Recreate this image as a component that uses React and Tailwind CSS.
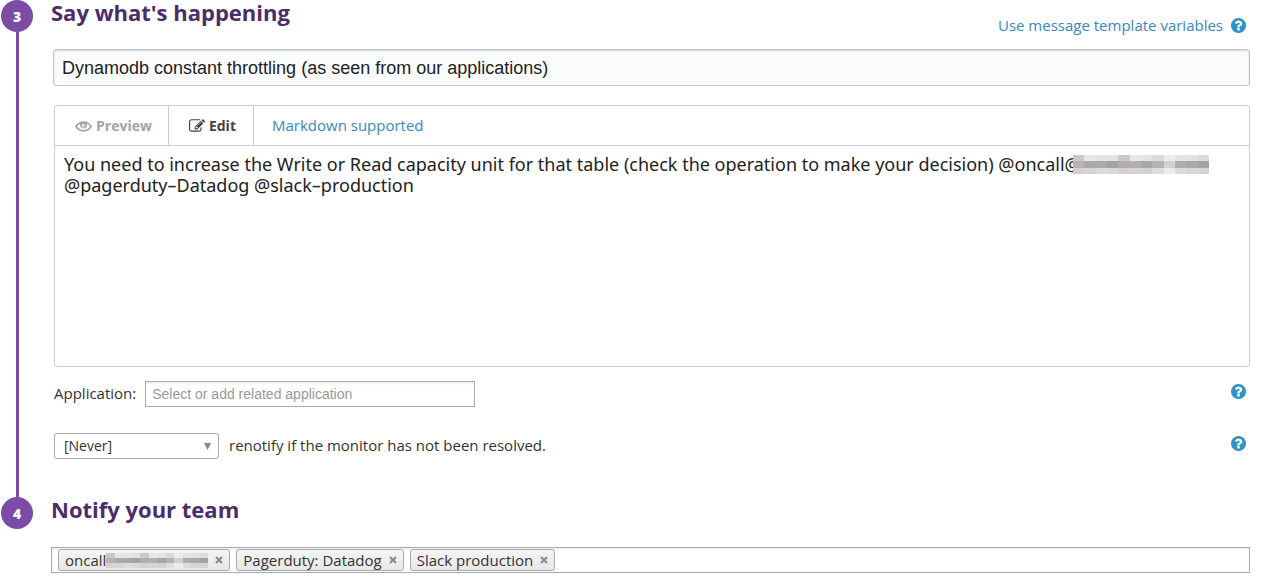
import { useState } from "react";

function Icon({ path, className, box = "0 0 1792 1792" }) {
  return (
    <svg viewBox={box} className={className} fill="currentColor" aria-hidden="true">
      <path d={path} />
    </svg>
  );
}

const PENCIL =
  "M888 1184l116-116-152-152-116 116v56h96v96h56zm440-720q-16-16-33 1l-350 350q-17 17-1 33t33-1l350-350q17-17 1-33zm80 594v190q0 119-84.500 203.500t-203.500 84.500h-832q-119 0-203.500-84.500t-84.500-203.500v-832q0-119 84.500-203.500t203.500-84.500h832q63 0 117 25 15 7 18 23 3 17-9 29l-49 49q-14 14-32 8-23-6-45-6h-832q-66 0-113 47t-47 113v832q0 66 47 113t113 47h832q66 0 113-47t47-113v-126q0-13 9-22l64-64q15-15 35-7t20 29zm-96-738l288 288-672 672h-288v-288zm444 132l-92 92-288-288 92-92q28-28 68-28t68 28l152 152q28 28 28 68t-28 68z";
const QUESTION =
  "M1024 1376v-192q0-14-9-23t-23-9h-192q-14 0-23 9t-9 23v192q0 14 9 23t23 9h192q14 0 23-9t9-23zm256-672q0-88-55.500-163t-138.500-116-170-41q-243 0-371 213-15 24 8 42l132 100q7 6 19 6 16 0 25-12 53-68 86-92 34-24 86-24 48 0 85.500 26t37.500 59q0 38-20 61t-68 45q-63 28-115.500 86.500t-52.500 125.500v36q0 14 9 23t23 9h192q14 0 23-9t9-23q0-19 21.500-49.500t54.500-49.500q32-18 49-28.500t46-35 44.500-48 28-60.500 12.500-81zm384 192q0 209-103 385.500t-279.500 279.500-385.500 103-385.500-103-279.500-279.500-103-385.500 103-385.500 279.500-279.500 385.500-103 385.500 103 279.500 279.500 103 385.500z";

function Eye() {
  return (
    <svg viewBox="0 0 17 12" className="h-3 w-[17px]" aria-hidden="true">
      <path d="M1 6.500C4.800 .5 12.200 .5 16 6.500 12.200 12.200 4.800 12.200 1 6.500z" fill="none" stroke="currentColor" strokeWidth="1.700" />
      <path d="M5 3.500a3.700 3.700 0 1 0 7 0l-3.500-1.500z" fill="currentColor" />
      <circle cx="8.500" cy="5.800" r="1.900" fill="#fff" />
      <circle cx="9" cy="6.300" r="1" fill="currentColor" />
    </svg>
  );
}

function Help({ label }) {
  return (
    <button type="button" aria-label={label} className="flex h-5 shrink-0 items-center text-[#2f93c8]">
      <Icon path={QUESTION} box="128 128 1536 1536" className="size-[15px]" />
    </button>
  );
}

function Mosaic({ className }) {
  const top = ["#c9c7ca", "#e6e6e6", "#e4e4e5", "#e2e2e3", "#cbc9cb", "#e8e6e7", "#e3e3e5", "#dadadc", "#ececec", "#e4e4e4", "#e2e2e2", "#dcdcde"];
  const mid = ["#b5b3b6", "#aaa9ab", "#a9a8aa", "#a3a2a5", "#b0acaf", "#b5aeb0", "#a7a6aa", "#b3b3b6", "#d0d0d1", "#aeadaf", "#a9a8ab", "#a3a2a6"];
  const low = ["#d6d0d0", "#d5d5d6", "#dcdcdd", "#d8d8da", "#d3d1d3", "#d9d3d4", "#d2d2d4", "#dddddf", "#ebebeb", "#dcdcdc", "#d6d6d8", "#d5d5d7"];
  return (
    <svg viewBox="0 0 12 3" preserveAspectRatio="none" shapeRendering="crispEdges" className={className} aria-hidden="true">
      {[top, mid, low].map((row, y) =>
        row.map((c, x) => <rect key={`${x}-${y}`} x={x} y={y} width="1" height="1" fill={c} />)
      )}
    </svg>
  );
}

function Step({ number, title, last, children }) {
  return (
    <section className="flex pl-px pr-[14px]">
      <div className="flex w-8 shrink-0 flex-col items-center">
        <span className="flex size-8 shrink-0 items-center justify-center rounded-full bg-[#7b4ba6] text-[14px] font-extrabold text-white">
          {number}
        </span>
        {!last && <span className="w-[3px] grow bg-[#7b4ba6]" />}
      </div>
      <div className="min-w-0 grow pl-[18px]">
        <h2 className="text-[22px] leading-6 font-bold text-[#4b2d6b]">{title}</h2>
        {children}
      </div>
    </section>
  );
}

function Tag({ children, name, onRemove }) {
  return (
    <li className="flex h-[22px] items-center rounded-[3px] border border-[#aaa] bg-linear-to-b from-[#f4f4f4] to-[#e8e8e8] px-[6px] text-[15px] leading-5 text-[#333]">
      {children}
      <button type="button" aria-label={`Remove ${name}`} onClick={onRemove} className="ml-[7px] text-[#888]">
        <svg viewBox="0 0 8 8" className="size-2" stroke="currentColor" strokeWidth="2" aria-hidden="true">
          <path d="M1 1l6 6M7 1l-6 6" />
        </svg>
      </button>
    </li>
  );
}

export default function App() {
  const [title, setTitle] = useState("Dynamodb constant throttling (as seen from our applications)");
  const [message, setMessage] = useState(
    "You need to increase the Write or Read capacity unit for that table (check the operation to make your decision) @oncall@\n@pagerduty\u2013Datadog @slack\u2013production"
  );
  const [tags, setTags] = useState(["oncall", "Pagerduty: Datadog", "Slack production"]);

  return (
    <main className="bg-white font-['Open_Sans','Noto_Sans',sans-serif] text-[15px] text-[#333]">
      <Step number="3" title="Say what's happening">
        <div className="-mt-[9px] flex items-center justify-end gap-2 pr-1 leading-5">
          <a href="#variables" className="text-[#3a87bd]">Use message template variables</a>
          <Help label="Help on template variables" />
        </div>
        <div className="pb-[38px] pl-[2px]">
          <input
            aria-label="Monitor title"
            value={title}
            onChange={(e) => setTitle(e.target.value)}
            className="mt-[14px] block h-[37px] w-full rounded-[3px] border border-[#c4c4c4] bg-[#fafbfd] px-2 pt-[2px] font-['Liberation_Sans',sans-serif] text-[18px] text-[#222] shadow-[inset_0_1px_2px_rgba(0,0,0,0.15)]"
          />
          <div className="mt-[19px] ml-px rounded-[3px] border border-[#ccc]">
            <div className="flex h-10 items-stretch border-b border-[#ccc]">
              <button type="button" className="flex items-center gap-1 border-r border-[#ccc] pr-4 pl-5 text-[14px] font-bold text-[#a3a3a3]">
                <Eye />
                Preview
              </button>
              <button type="button" className="flex items-center gap-1 border-r border-[#ccc] pr-[17px] pl-5 text-[14px] font-bold text-[#444]">
                <Icon path={PENCIL} className="size-4" />
                Edit
              </button>
              <a href="#markdown" className="self-center pl-[18px] text-[#3a87bd]">Markdown supported</a>
            </div>
            <div className="relative">
              <textarea
                aria-label="Message"
                value={message}
                onChange={(e) => setMessage(e.target.value)}
                className="block h-[220px] w-full resize-none px-[9px] py-2 font-['Noto_Sans','Open_Sans',sans-serif] text-[18px] leading-[21px] text-[#222]"
              />
              <Mosaic className="absolute top-[9px] left-[1018px] h-[19px] w-[136px]" />
            </div>
          </div>
          <div className="mt-[14px] ml-px flex items-start pr-1 leading-6">
            <label htmlFor="application">Application:</label>
            <input
              id="application"
              placeholder="Select or add related application"
              className="ml-[9px] h-[26px] w-[330px] border border-[#aaa] px-[6px] font-['Liberation_Sans',sans-serif] text-[14px] shadow-[inset_0_2px_2px_rgba(0,0,0,0.06)] placeholder:text-[#999]"
            />
            <span className="grow" />
            <Help label="Help on applications" />
          </div>
          <div className="mt-[26px] ml-px flex items-start pr-1 leading-6">
            <div className="relative">
              <select id="renotify" className="block h-[26px] w-[165px] appearance-none rounded-[3px] border border-[#aaa] bg-white px-[9px] text-[14px] leading-5">
                <option>[Never]</option>
              </select>
              <svg viewBox="0 0 8 8" className="pointer-events-none absolute top-[10px] right-2 size-[7px] fill-[#888]" aria-hidden="true">
                <path d="M0 0h8L4 8z" />
              </svg>
            </div>
            <label htmlFor="renotify" className="ml-[10px]">renotify if the monitor has not been resolved.</label>
            <span className="grow" />
            <Help label="Help on renotification" />
          </div>
        </div>
      </Step>
      <Step number="4" title="Notify your team" last>
        <ul className="mt-[26px] flex h-[26px] items-center gap-[6px] border border-[#aaa] pl-[6px] shadow-[inset_0_2px_2px_rgba(0,0,0,0.06)]">
          {tags.map((t) => (
            <Tag key={t} name={t} onRemove={() => setTags(tags.filter((x) => x !== t))}>
              {t}
              {t === "oncall" && <Mosaic className="h-[15px] w-[102px]" />}
            </Tag>
          ))}
        </ul>
      </Step>
    </main>
  );
}
